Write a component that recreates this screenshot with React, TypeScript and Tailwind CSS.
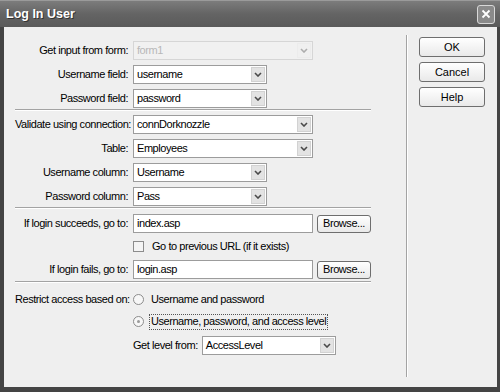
import type { ReactNode } from "react";

const font = { fontFamily: "'Liberation Sans', Arial, sans-serif" };

function Chevron() {
  return (
    <svg width="8" height="5" viewBox="0 0 8 5">
      <path d="M1 1 L4 4 L7 1" fill="none" stroke="#4a4a4a" strokeWidth="1.6" />
    </svg>
  );
}

function Select({ value, w, disabled }: { value: string; w: string; disabled?: boolean }) {
  return (
    <div
      className={`flex h-[19px] items-center border ${w} ${
        disabled ? "border-[#d6d6d6] bg-[#f1f1f1] text-[#b8b8b8]" : "border-[#9c9c9c] bg-white text-black"
      }`}
    >
      <span className="flex-1 truncate pl-[3px]">{value}</span>
      <span
        className={`mr-[1px] flex h-[15px] w-[14px] items-center justify-center border ${
          disabled ? "border-[#e6e6e6] bg-[#f0f0f0] opacity-40" : "border-[#d2d2d2] bg-[#e3e3e3]"
        }`}
      >
        <Chevron />
      </span>
    </div>
  );
}

function Input({ value }: { value: string }) {
  return (
    <div className="flex h-[19px] w-[180px] items-center border border-[#9c9c9c] bg-white pl-[3px]">
      {value}
    </div>
  );
}

function Btn({ children, w }: { children: ReactNode; w: string }) {
  return (
    <div
      className={`flex items-center justify-center rounded-[3px] border border-[#6e6e6e] bg-gradient-to-b from-white to-[#e9e9e9] ${w}`}
    >
      {children}
    </div>
  );
}

function Row({ label, mt, children }: { label: string; mt: string; children: ReactNode }) {
  return (
    <div className={`flex h-[19px] items-center gap-[5px] ${mt}`}>
      <span className="w-[113px] whitespace-nowrap text-right">{label}</span>
      {children}
    </div>
  );
}

function Sep({ mt }: { mt: string }) {
  return <div className={`h-[2px] w-[356px] border-t border-b border-t-[#a3a3a3] border-b-white ${mt}`} />;
}

export default function App() {
  return (
    <div className="flex h-[392px] w-[500px] flex-col bg-[#3f3f3f] text-[11px] tracking-[-0.45px] text-black" style={font}>
      {/* title bar */}
      <div className="flex h-[27px] items-center justify-between border-t border-[#9a9a9a] bg-gradient-to-b from-[#7c7c7c] via-[#646464] to-[#5a5a5a] pl-[6px] pr-[5px]">
        <span className="text-[12.5px] font-bold tracking-normal text-white [text-shadow:1px_1px_0_#333]">Log In User</span>
        <div className="flex h-[19px] w-[18px] items-center justify-center rounded-[3px] border border-[#d8d8d8] bg-[#8a8a8a]">
          <svg width="10" height="10" viewBox="0 0 10 10">
            <path d="M1.5 1.5 L8.5 8.5 M8.5 1.5 L1.5 8.5" stroke="white" strokeWidth="1.8" />
          </svg>
        </div>
      </div>

      {/* body */}
      <div className="flex flex-1 border-b-[5px] border-l-[4px] border-r-[3px] border-[#444] bg-[#efefef]">
        <div className="flex w-[397px] flex-col pl-[11px] pt-[14px]">
          <Row label="Get input from form:" mt="mt-0">
            <Select value="form1" w="w-[180px]" disabled />
          </Row>
          <Row label="Username field:" mt="mt-[5px]">
            <Select value="username" w="w-[134px]" />
          </Row>
          <Row label="Password field:" mt="mt-[5px]">
            <Select value="password" w="w-[134px]" />
          </Row>
          <Sep mt="mt-[1px]" />
          <Row label="Validate using connection:" mt="mt-[4px]">
            <Select value="connDorknozzle" w="w-[180px]" />
          </Row>
          <Row label="Table:" mt="mt-[5px]">
            <Select value="Employees" w="w-[180px]" />
          </Row>
          <Row label="Username column:" mt="mt-[5px]">
            <Select value="Username" w="w-[134px]" />
          </Row>
          <Row label="Password column:" mt="mt-[5px]">
            <Select value="Pass" w="w-[134px]" />
          </Row>
          <Sep mt="mt-[1px]" />
          <Row label="If login succeeds, go to:" mt="mt-[5px]">
            <Input value="index.asp" />
            <Btn w="ml-[-1px] h-[18px] w-[54px]">Browse...</Btn>
          </Row>
          <div className="ml-[118px] mt-[4px] flex h-[19px] items-center gap-[8px]">
            <span className="h-[11px] w-[11px] border border-[#8c8c8c] bg-[#f4f4f4]" />
            <span>Go to previous URL (if it exists)</span>
          </div>
          <Row label="If login fails, go to:" mt="mt-[4px]">
            <Input value="login.asp" />
            <Btn w="ml-[-1px] h-[18px] w-[54px]">Browse...</Btn>
          </Row>
          <Sep mt="mt-[2px]" />
          <Row label="Restrict access based on:" mt="mt-[7px]">
            <span className="h-[11px] w-[11px] rounded-full border border-[#8c8c8c] bg-[#f7f7f7]" />
            <span className="ml-[2px]">Username and password</span>
          </Row>
          <div className="ml-[118px] mt-[3px] flex h-[19px] items-center gap-[5px]">
            <span className="flex h-[11px] w-[11px] items-center justify-center rounded-full border border-[#8c8c8c] bg-[#f7f7f7]">
              <span className="h-[3px] w-[3px] rounded-full bg-[#9a9a9a]" />
            </span>
            <span className="flex h-[16px] items-center border border-dotted border-[#555] pl-[1px] pr-[1px]">
              Username, password, and access level
            </span>
          </div>
          <div className="ml-[118px] mt-[5px] flex h-[19px] items-center gap-[4px]">
            <span>Get level from:</span>
            <Select value="AccessLevel" w="w-[134px]" />
          </div>
        </div>

        {/* vertical separator */}
        <div className="ml-[5px] mt-[8px] h-[342px] w-[2px] border-l border-r border-l-[#a3a3a3] border-r-white" />

        {/* buttons */}
        <div className="ml-[11px] mt-[10px] flex flex-col gap-[5px] tracking-normal">
          <Btn w="h-[20px] w-[66px]">OK</Btn>
          <Btn w="h-[20px] w-[66px]">Cancel</Btn>
          <Btn w="h-[20px] w-[66px]">Help</Btn>
        </div>
      </div>
    </div>
  );
}
